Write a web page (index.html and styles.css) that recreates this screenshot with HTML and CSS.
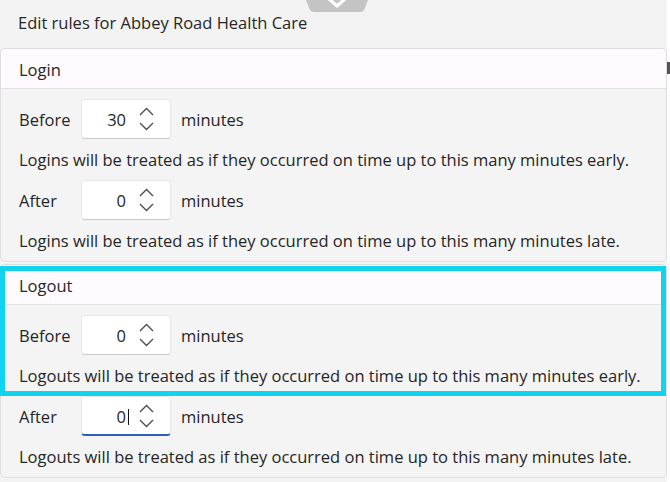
FILE: index.html
```html
<!DOCTYPE html>
<html lang="en">
<head>
<meta charset="utf-8">
<title>Edit rules</title>
<link rel="stylesheet" href="styles.css">
</head>
<body>
<div class="page">
  <main class="dialog">
    <div class="grip">
      <svg width="62" height="13" viewBox="0 0 62 13">
        <path d="M0 0 H62 L58.5 9 Q57.2 12 54 12 H8 Q4.8 12 3.5 9 Z" fill="#c4c4c4"/>
        <path d="M23 -1 L31 6 L39 -1" fill="none" stroke="#ffffff" stroke-width="3.2" stroke-linejoin="round"/>
      </svg>
    </div>
    <h1 class="title">Edit rules for Abbey Road Health Care</h1>

    <section class="panel">
      <div class="panel-head">Login</div>
      <div class="panel-body">
        <div class="row">
          <span class="lbl">Before</span>
          <div class="spin"><span class="val">30</span><svg class="arrows" width="15" height="24" viewBox="0 0 15 24"><path d="M1 8 L7.5 1.5 L14 8 M1 16 L7.5 22.5 L14 16" fill="none" stroke="#4a4a4a" stroke-width="1.3"/></svg></div>
          <span class="unit">minutes</span>
        </div>
        <p class="desc">Logins will be treated as if they occurred on time up to this many minutes early.</p>
        <div class="row">
          <span class="lbl">After</span>
          <div class="spin"><span class="val">0</span><svg class="arrows" width="15" height="24" viewBox="0 0 15 24"><path d="M1 8 L7.5 1.5 L14 8 M1 16 L7.5 22.5 L14 16" fill="none" stroke="#4a4a4a" stroke-width="1.3"/></svg></div>
          <span class="unit">minutes</span>
        </div>
        <p class="desc">Logins will be treated as if they occurred on time up to this many minutes late.</p>
      </div>
    </section>

    <section class="panel panel-logout">
      <div class="panel-head">Logout</div>
      <div class="panel-body">
        <div class="row">
          <span class="lbl">Before</span>
          <div class="spin"><span class="val">0</span><svg class="arrows" width="15" height="24" viewBox="0 0 15 24"><path d="M1 8 L7.5 1.5 L14 8 M1 16 L7.5 22.5 L14 16" fill="none" stroke="#4a4a4a" stroke-width="1.3"/></svg></div>
          <span class="unit">minutes</span>
        </div>
        <p class="desc">Logouts will be treated as if they occurred on time up to this many minutes early.</p>
        <div class="row">
          <span class="lbl">After</span>
          <div class="spin spin-focus"><span class="val">0<span class="caret"></span></span><svg class="arrows" width="15" height="24" viewBox="0 0 15 24"><path d="M1 8 L7.5 1.5 L14 8 M1 16 L7.5 22.5 L14 16" fill="none" stroke="#4a4a4a" stroke-width="1.3"/></svg></div>
          <span class="unit">minutes</span>
        </div>
        <p class="desc">Logouts will be treated as if they occurred on time up to this many minutes late.</p>
      </div>
      <div class="highlight"></div>
    </section>
  </main>
  <div class="edge"><span class="thumb"></span></div>
</div>
</body>
</html>
```

FILE: styles.css
```css
html, body {
  margin: 0;
  padding: 0;
  background: #f3f3f3;
}
body {
  font-family: "Open Sans", "Noto Sans", "Liberation Sans", sans-serif;
  font-size: 16.5px;
  color: #262626;
}
.page {
  display: flex;
  width: 670px;
  height: 482px;
  overflow: hidden;
}
.dialog {
  position: relative;
  width: 667px;
  flex: none;
}
.edge {
  flex: 1;
  background: #ffffff;
  display: flex;
  flex-direction: column;
}
.thumb {
  display: block;
  margin-top: 62px;
  height: 12px;
  background: #555;
}
.grip {
  position: absolute;
  left: 306px;
  top: 0;
  line-height: 0;
}
.title {
  margin: 0;
  height: 48px;
  line-height: 46px;
  padding-left: 18px;
  font-size: 16.5px;
  font-weight: normal;
}
.panel {
  position: relative;
  border: 1px solid #dedede;
  border-radius: 5px;
  background: #f4f4f4;
}
.panel-logout {
  margin-top: 2px;
}
.panel-head {
  height: 40px;
  padding: 1px 18px 0;
  box-sizing: border-box;
  display: flex;
  align-items: center;
  background: #fdfbfd;
  border-bottom: 1px solid #e2e2e2;
  border-radius: 5px 5px 0 0;
}
.panel-body {
  padding: 10px 18px 0;
}
.row {
  display: flex;
  align-items: center;
  height: 40px;
}
.lbl {
  width: 62px;
}
.spin {
  width: 90px;
  height: 40px;
  box-sizing: border-box;
  display: flex;
  align-items: center;
  padding: 0 16px 0 8px;
  margin-right: 10px;
  background: #ffffff;
  border: 1px solid #e6e6e6;
  border-bottom-color: #c9c9c9;
  border-radius: 4px;
}
.spin-focus {
  border-bottom: 2px solid #2d5fba;
  padding-top: 1px;
}
.val {
  flex: 1;
  text-align: right;
  margin-right: 13px;
  position: relative;
}
.caret {
  position: absolute;
  right: -3px;
  top: 4px;
  width: 1px;
  height: 16px;
  background: #111;
}
.arrows {
  display: block;
}
.desc {
  margin: 0;
  height: 41px;
  line-height: 41px;
  white-space: nowrap;
}
.highlight {
  position: absolute;
  left: -1px;
  top: 1px;
  width: 666px;
  height: 130px;
  box-sizing: border-box;
  border: 5px solid #10d4ef;
  pointer-events: none;
}
```
